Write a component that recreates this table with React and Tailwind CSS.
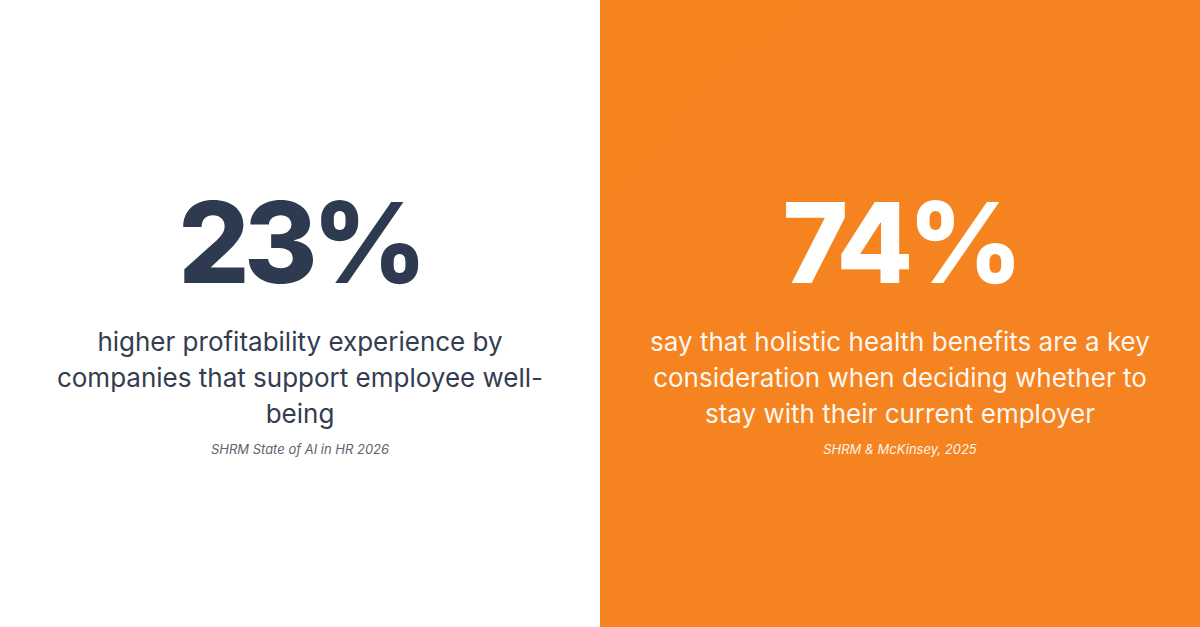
import React from "react";

const stats = [
  {
    value: "23%",
    text: "higher profitability experience by companies that support employee well-being",
    source: "SHRM State of AI in HR 2026",
    panel: "bg-white",
    valueColor: "text-[#2d3a4f]",
    textColor: "text-[#333d4f]",
    sourceColor: "text-[#5f6470]",
  },
  {
    value: "74%",
    text: "say that holistic health benefits are a key consideration when deciding whether to stay with their current employer",
    source: "SHRM & McKinsey, 2025",
    panel: "bg-gradient-to-br from-[#f5841f] to-[#f58322]",
    valueColor: "text-white",
    textColor: "text-white/95",
    sourceColor: "text-white/90",
  },
];

const StatPanel = ({ stat }) => (
  <div className={`flex flex-1 flex-col items-center justify-center px-10 pt-[18px] text-center ${stat.panel}`}>
    <p className={`text-[112px] font-extrabold leading-none tracking-[-0.05em] ${stat.valueColor}`}>
      {stat.value}
    </p>
    <p className={`mt-[26px] text-[26px] leading-[36px] ${stat.textColor}`}>{stat.text}</p>
    <p className={`mt-2 text-[13px] italic ${stat.sourceColor}`}>{stat.source}</p>
  </div>
);

export default function App() {
  return (
    <main
      className="flex h-[627px] w-[1200px] overflow-hidden"
      style={{ fontFamily: "Inter, 'Noto Sans', sans-serif" }}
    >
      {stats.map((stat) => (
        <StatPanel key={stat.value} stat={stat} />
      ))}
    </main>
  );
}
